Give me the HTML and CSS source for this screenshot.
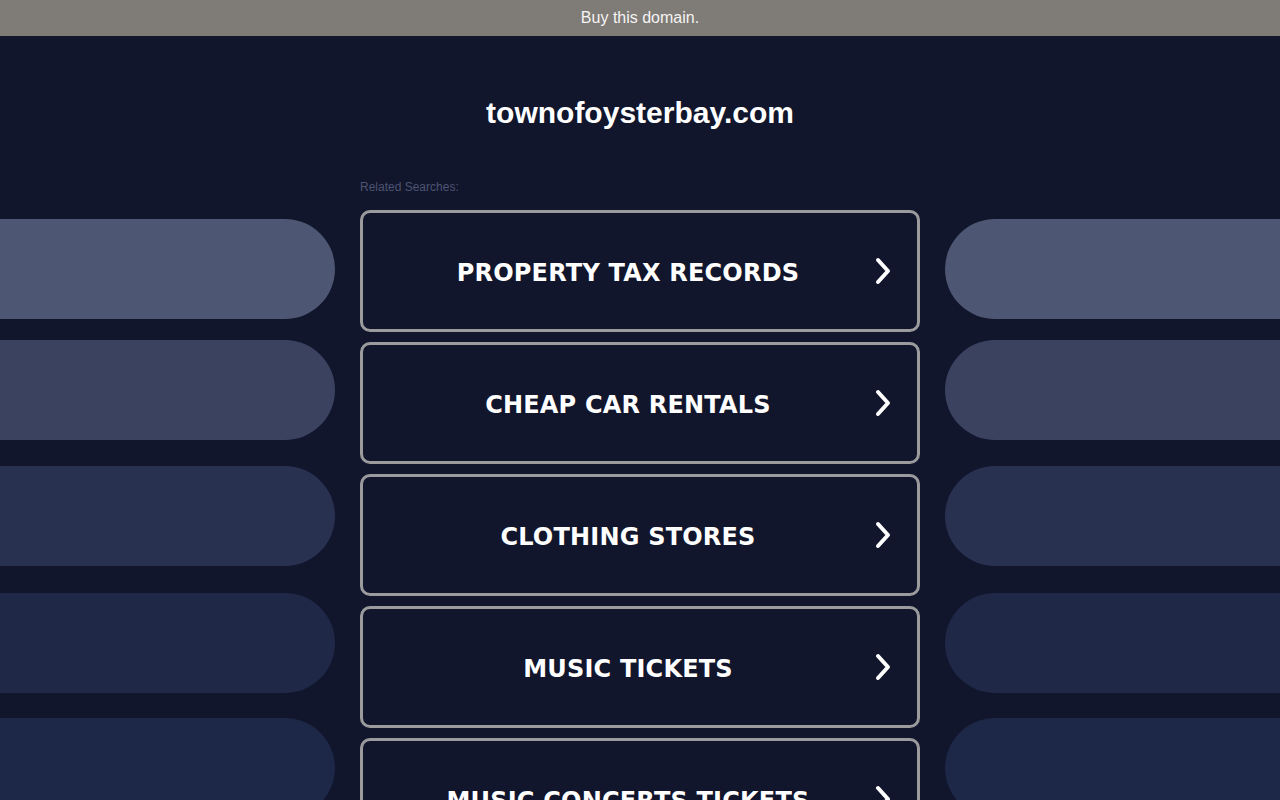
FILE: index.html
```html
<!DOCTYPE html>
<html>
<head>
<meta charset="utf-8">
<link rel="stylesheet" href="styles.css">
</head>
<body>
<div class="topbar">Buy this domain.</div>
<h1 class="domain">townofoysterbay.com</h1>
<div class="layout">
  <div class="side side-left">
    <div class="pill p1"></div>
    <div class="pill p2"></div>
    <div class="pill p3"></div>
    <div class="pill p4"></div>
    <div class="pill p5"></div>
  </div>
  <div class="center">
    <div class="related">Related Searches:</div>
    <div class="links">
      <a class="link"><span class="label">PROPERTY TAX RECORDS</span><svg class="chev" viewBox="0 0 16 28"><path d="M3 3 L13 14 L3 25" /></svg></a>
      <a class="link"><span class="label">CHEAP CAR RENTALS</span><svg class="chev" viewBox="0 0 16 28"><path d="M3 3 L13 14 L3 25" /></svg></a>
      <a class="link"><span class="label">CLOTHING STORES</span><svg class="chev" viewBox="0 0 16 28"><path d="M3 3 L13 14 L3 25" /></svg></a>
      <a class="link"><span class="label">MUSIC TICKETS</span><svg class="chev" viewBox="0 0 16 28"><path d="M3 3 L13 14 L3 25" /></svg></a>
      <a class="link"><span class="label">MUSIC CONCERTS TICKETS</span><svg class="chev" viewBox="0 0 16 28"><path d="M3 3 L13 14 L3 25" /></svg></a>
    </div>
  </div>
  <div class="side side-right">
    <div class="pill p1"></div>
    <div class="pill p2"></div>
    <div class="pill p3"></div>
    <div class="pill p4"></div>
    <div class="pill p5"></div>
  </div>
</div>
</body>
</html>
```
FILE: styles.css
```css
html, body {
  margin: 0;
  padding: 0;
  background: #11162c;
  height: 800px;
  overflow: hidden;
}
body {
  font-family: "Liberation Sans", Arial, sans-serif;
}
.topbar {
  height: 36px;
  background: #7f7b76;
  color: #f4f4f4;
  font-size: 16px;
  line-height: 35px;
  text-align: center;
}
.domain {
  margin: 0;
  padding-top: 57px;
  height: 40px;
  line-height: 40px;
  font-size: 30px;
  font-weight: bold;
  color: #ffffff;
  text-align: center;
}
.layout {
  display: grid;
  grid-template-columns: 335px 560px 335px;
  column-gap: 25px;
  margin-top: 46px;
}
.side {
  display: flex;
  flex-direction: column;
  padding-top: 40px;
}
.pill {
  height: 100px;
  flex: none;
}
.side-left .pill { border-radius: 0 50px 50px 0; }
.side-right .pill { border-radius: 50px 0 0 50px; }
.p1 { background: #4d5673; }
.p2 { background: #3a4260; margin-top: 21px; }
.p3 { background: #283150; margin-top: 26px; }
.p4 { background: #1f2847; margin-top: 27px; }
.p5 { background: #1d2748; margin-top: 25px; }
.related {
  font-size: 12px;
  color: #4d5472;
  height: 14px;
  line-height: 14px;
  margin-top: 1px;
}
.links {
  display: flex;
  flex-direction: column;
  gap: 10px;
  margin-top: 16px;
}
.link {
  display: flex;
  align-items: center;
  justify-content: center;
  position: relative;
  box-sizing: border-box;
  height: 122px;
  flex: none;
  border: 3px solid #9b9b9d;
  border-radius: 10px;
  background: #11162c;
  color: #ffffff;
  text-decoration: none;
}
.label {
  font-family: "DejaVu Sans", Verdana, sans-serif;
  font-weight: bold;
  font-size: 24px;
  letter-spacing: 0.2px;
  padding-right: 24px;
  padding-top: 4px;
}
.chev {
  position: absolute;
  right: 26px;
  top: 50%;
  width: 16px;
  height: 28px;
  margin-top: -14px;
}
.chev path {
  fill: none;
  stroke: #ffffff;
  stroke-width: 4;
  stroke-linecap: round;
  stroke-linejoin: round;
}
```
